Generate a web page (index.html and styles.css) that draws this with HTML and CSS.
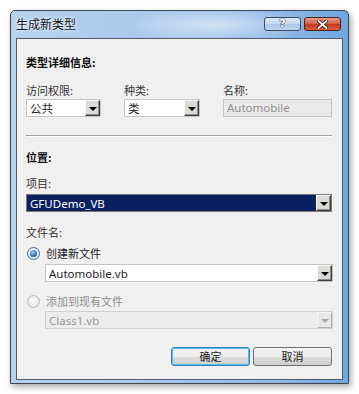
FILE: index.html
```html
<!DOCTYPE html>
<html lang="zh-CN">
<head>
    <meta charset="UTF-8">
    <meta name="viewport" content="width=device-width, initial-scale=1.0">
    <title>生成新类型</title>
    <link rel="stylesheet" href="styles.css">
</head>
<body>

<div class="window">
    <!-- Title bar -->
    <div class="titlebar">
        <span class="title">生成新类型</span>
        <div class="caption-buttons">
            <span class="cap-btn help">?</span>
            <span class="cap-btn close">
                <svg width="11" height="9" viewBox="0 0 11 9">
                    <path d="M1.5 1 L9.5 8 M9.5 1 L1.5 8" stroke="#3b1a14" stroke-width="3.4" stroke-linecap="square"/>
                    <path d="M1.5 1 L9.5 8 M9.5 1 L1.5 8" stroke="#fff" stroke-width="1.8" stroke-linecap="square"/>
                </svg>
            </span>
        </div>
    </div>

    <div class="client">
        <div class="section-title">类型详细信息:</div>

        <div class="type-row">
            <div class="field">
                <div class="label">访问权限:</div>
                <div class="combo"><span class="value">公共</span><span class="drop"></span></div>
            </div>
            <div class="field">
                <div class="label">种类:</div>
                <div class="combo"><span class="value">类</span><span class="drop"></span></div>
            </div>
            <div class="field">
                <div class="label">名称:</div>
                <div class="textbox disabled">Automobile</div>
            </div>
        </div>

        <div class="separator"></div>

        <div class="section-title location">位置:</div>
        <div class="label project-label">项目:</div>
        <div class="combo selected project"><span class="value">GFUDemo_VB</span><span class="drop"></span></div>

        <div class="label file-label">文件名:</div>
        <div class="radio-row first">
            <span class="radio checked"></span>
            <span>创建新文件</span>
        </div>
        <div class="combo indent new-file"><span class="value">Automobile.vb</span><span class="drop"></span></div>

        <div class="radio-row second disabled">
            <span class="radio"></span>
            <span>添加到现有文件</span>
        </div>
        <div class="combo indent existing disabled"><span class="value">Class1.vb</span><span class="drop"></span></div>

        <div class="buttons">
            <button class="btn default">确定</button>
            <button class="btn">取消</button>
        </div>
    </div>
</div>

</body>
</html>
```

FILE: styles.css
```css
body {
    margin: 0;
    padding: 0;
    background-color: #fff;
    font-family: "Noto Sans", "Noto Sans CJK SC", sans-serif;
    color: #1e1e1e;
}
.window {
    margin: 10px;
    width: 339px;
    height: 374px;
    box-sizing: border-box;
    border: 1px solid #3d4650;
    border-radius: 5px 5px 0 0;
    padding: 0 5px 3px 5px;
    display: flex;
    flex-direction: column;
    background:
        radial-gradient(ellipse 90px 18px at 205px 14px, rgba(255, 255, 255, 0.55), rgba(255, 255, 255, 0)),
        linear-gradient(to right, #b7d1ee 0%, #a9c8ec 45%, #8fb8e6 80%, #6ea6e2 100%);
    box-shadow: 2px 3px 6px rgba(0, 0, 0, 0.35);
}
.titlebar {
    height: 27px;
    display: flex;
    align-items: center;
    justify-content: space-between;
}
.title {
    font-family: "Noto Sans CJK SC", sans-serif;
    font-size: 12px;
    color: #111;
    text-shadow: 0 0 5px rgba(255, 255, 255, 0.9), 0 0 2px rgba(255, 255, 255, 0.9);
    margin-top: -2px;
}
.caption-buttons {
    display: flex;
    gap: 3px;
    align-self: flex-start;
    margin-top: 6px;
    margin-right: 2px;
}
.cap-btn {
    width: 37px;
    height: 14px;
    box-sizing: border-box;
    border: 1px solid #3a4a5c;
    border-radius: 3px;
    display: flex;
    align-items: center;
    justify-content: center;
}
.help {
    background: linear-gradient(to bottom, #dfeaf7 0%, #c3d8f0 50%, #aac7e8 51%, #bcd5f0 100%);
    font-family: "DejaVu Sans", sans-serif;
    font-size: 11px;
    font-weight: bold;
    color: #fff;
    text-shadow: 0 0 1px #333, 0 0 1px #333, 0 0 1px #333;
    line-height: 12px;
}
.close {
    background: linear-gradient(to bottom, #e69b8a 0%, #d4674f 45%, #c0391f 55%, #d9613c 100%);
    border-color: #4d2018;
}
.client {
    flex: 1;
    background-color: #f0f0f0;
    border: 1px solid #4e5d6e;
    padding: 0 10px 0 9px;
    font-family: "Noto Sans CJK SC", sans-serif;
    font-size: 11px;
}
.section-title {
    font-weight: bold;
    line-height: 16px;
    height: 16px;
    margin-top: 15px;
    color: #111;
}
.label {
    line-height: 16px;
    height: 16px;
    color: #333;
}
.type-row {
    display: grid;
    grid-template-columns: 75px 76px 109px;
    justify-content: space-between;
    margin-top: 12px;
}
.type-row .combo, .type-row .textbox {
    margin-top: 1px;
}
.combo {
    height: 18px;
    box-sizing: border-box;
    border: 1px solid #c4c4c4;
    background-color: #fff;
    display: flex;
    align-items: center;
    justify-content: space-between;
    font-size: 11.5px;
}
.combo .value {
    padding-left: 3px;
    white-space: nowrap;
}
.drop {
    width: 15px;
    height: 16px;
    box-sizing: border-box;
    background-color: #dcdad5;
    border: 1px solid;
    border-color: #f8f8f8 #404040 #404040 #f8f8f8;
    box-shadow: inset -1px -1px 0 #8a8a8a;
    display: flex;
    align-items: center;
    justify-content: center;
}
.drop::after {
    content: "";
    border-left: 4px solid transparent;
    border-right: 4px solid transparent;
    border-top: 4px solid #000;
    margin-top: 1px;
}
.textbox {
    height: 18px;
    box-sizing: border-box;
    border: 1px solid #c4c4c4;
    padding-left: 3px;
    line-height: 16px;
    font-family: "Noto Sans", sans-serif;
    font-size: 11.5px;
}
.textbox.disabled {
    background-color: #ebebeb;
    color: #8d8d8d;
}
.separator {
    margin-top: 18px;
    height: 1px;
    background-color: #a0a0a0;
    border-bottom: 1px solid #fff;
}
.section-title.location {
    margin-top: 12px;
}
.project-label {
    margin-top: 10px;
}
.combo.project {
    margin-top: 3px;
    border-color: #7a7a7a;
}
.combo.selected {
    background-color: #0a2060;
    color: #fff;
}
.combo.selected .value, .combo.indent .value {
    font-family: "Noto Sans", sans-serif;
}
.file-label {
    margin-top: 12px;
}
.radio-row {
    display: flex;
    align-items: center;
    gap: 6px;
    height: 16px;
    padding-left: 1px;
    color: #222;
}
.radio-row.first {
    margin-top: 5px;
}
.radio-row.second {
    margin-top: 11px;
}
.radio-row.disabled {
    color: #8d8d8d;
}
.radio {
    width: 13px;
    height: 13px;
    box-sizing: border-box;
    border-radius: 50%;
    border: 1px solid #b9b9b9;
    background: radial-gradient(circle at 50% 40%, #fdfdfd, #dcdcdc);
    display: flex;
    align-items: center;
    justify-content: center;
}
.radio.checked {
    border-color: #3c6d99;
    background: radial-gradient(circle at 50% 40%, #ffffff, #cfe0ef);
}
.radio.checked::after {
    content: "";
    width: 7px;
    height: 7px;
    border-radius: 50%;
    background: radial-gradient(circle at 40% 35%, #9fd2f7, #2a6fb1 60%, #174d82);
}
.combo.indent {
    margin-left: 19px;
    margin-right: -1px;
}
.combo.new-file {
    margin-top: 3px;
}
.combo.existing {
    margin-top: 2px;
}
.combo.disabled {
    background-color: #ececec;
    color: #9a9a9a;
    border-color: #cfcfcf;
}
.combo.disabled .drop {
    border-color: #f8f8f8 #b0b0b0 #b0b0b0 #f8f8f8;
    box-shadow: none;
    background-color: #e8e8e8;
}
.combo.disabled .drop::after {
    border-top-color: #a8a8a8;
}
.buttons {
    display: flex;
    justify-content: flex-end;
    gap: 3px;
    margin-top: 18px;
}
.btn {
    width: 79px;
    height: 19px;
    box-sizing: border-box;
    border: 1px solid #707070;
    border-radius: 3px;
    background: linear-gradient(to bottom, #f4f4f4 0%, #ebebeb 50%, #dddddd 51%, #cfcfcf 100%);
    font-family: "Noto Sans CJK SC", sans-serif;
    font-size: 11px;
    color: #222;
    padding: 0;
    line-height: 15px;
    cursor: pointer;
}
.btn.default {
    border-color: #3c7fb1;
    box-shadow: inset 0 0 0 1px #48c0f0;
}
```
